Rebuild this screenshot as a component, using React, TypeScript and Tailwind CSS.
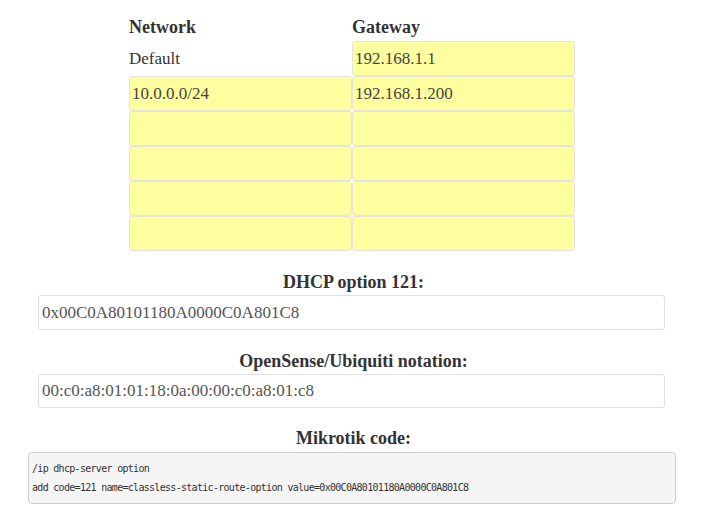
import { useState } from "react"

const serif = { fontFamily: '"Liberation Serif", Georgia, serif' }

export default function App() {
  const [rows, setRows] = useState([
    { net: "Default", gw: "192.168.1.1" },
    { net: "10.0.0.0/24", gw: "192.168.1.200" },
    { net: "", gw: "" },
    { net: "", gw: "" },
    { net: "", gw: "" },
    { net: "", gw: "" },
  ])

  function update(i: number, key: "net" | "gw", v: string) {
    const next = rows.slice()
    next[i] = { ...next[i], [key]: v }
    setRows(next)
  }

  const cell =
    "w-full h-[35px] bg-[#ffffa0] border border-[#e3e3e3] rounded-[3px] px-[2px] text-[17px] text-[#444] outline-none"

  return (
    <div className="w-[707px] h-[518px] overflow-hidden bg-white text-[#333] pt-[13px]" style={serif}>
      <div className="w-[446px] ml-[129px] grid grid-cols-2">
        <div className="h-[28px] flex items-center font-bold text-[18px]">Network</div>
        <div className="h-[28px] flex items-center font-bold text-[18px]">Gateway</div>
        {rows.map((r, i) => (
          <>
            {i === 0 ? (
              <div key={"n" + i} className="h-[35px] flex items-center text-[17px]">{r.net}</div>
            ) : (
              <input key={"n" + i} className={cell} style={serif} value={r.net} onChange={e => update(i, "net", e.target.value)} />
            )}
            <input key={"g" + i} className={cell} style={serif} value={r.gw} onChange={e => update(i, "gw", e.target.value)} />
          </>
        ))}
      </div>

      <h3 className="text-center font-bold text-[18px] h-[22px] leading-[22px] mt-[20px] mb-[2px]">DHCP option 121:</h3>
      <input
        readOnly
        className="block w-[627px] h-[35px] ml-[38px] border border-[#e0e0e0] rounded-[3px] px-[3px] text-[17px] text-[#555] outline-none"
        style={serif}
        value="0x00C0A80101180A0000C0A801C8"
      />

      <h3 className="text-center font-bold text-[18px] h-[22px] leading-[22px] mt-[20px] mb-[2px]">OpenSense/Ubiquiti notation:</h3>
      <input
        readOnly
        className="block w-[627px] h-[34px] ml-[38px] border border-[#e0e0e0] rounded-[3px] px-[3px] text-[17px] text-[#555] outline-none"
        style={serif}
        value="00:c0:a8:01:01:18:0a:00:00:c0:a8:01:c8"
      />

      <h3 className="text-center font-bold text-[18px] h-[22px] leading-[22px] mt-[19px] mb-[3px]">Mikrotik code:</h3>
      <pre
        className="w-[648px] ml-[28px] bg-[#f5f5f5] border border-[#cccccc] rounded-[4px] px-[3px] pt-[6px] pb-[6px] text-[10px] tracking-[-0.7px] leading-[19px] text-[#333]"
        style={{ fontFamily: '"DejaVu Sans Mono", monospace' }}
      >
        {"/ip dhcp-server option\nadd code=121 name=classless-static-route-option value=0x00C0A80101180A0000C0A801C8"}
      </pre>
    </div>
  )
}
